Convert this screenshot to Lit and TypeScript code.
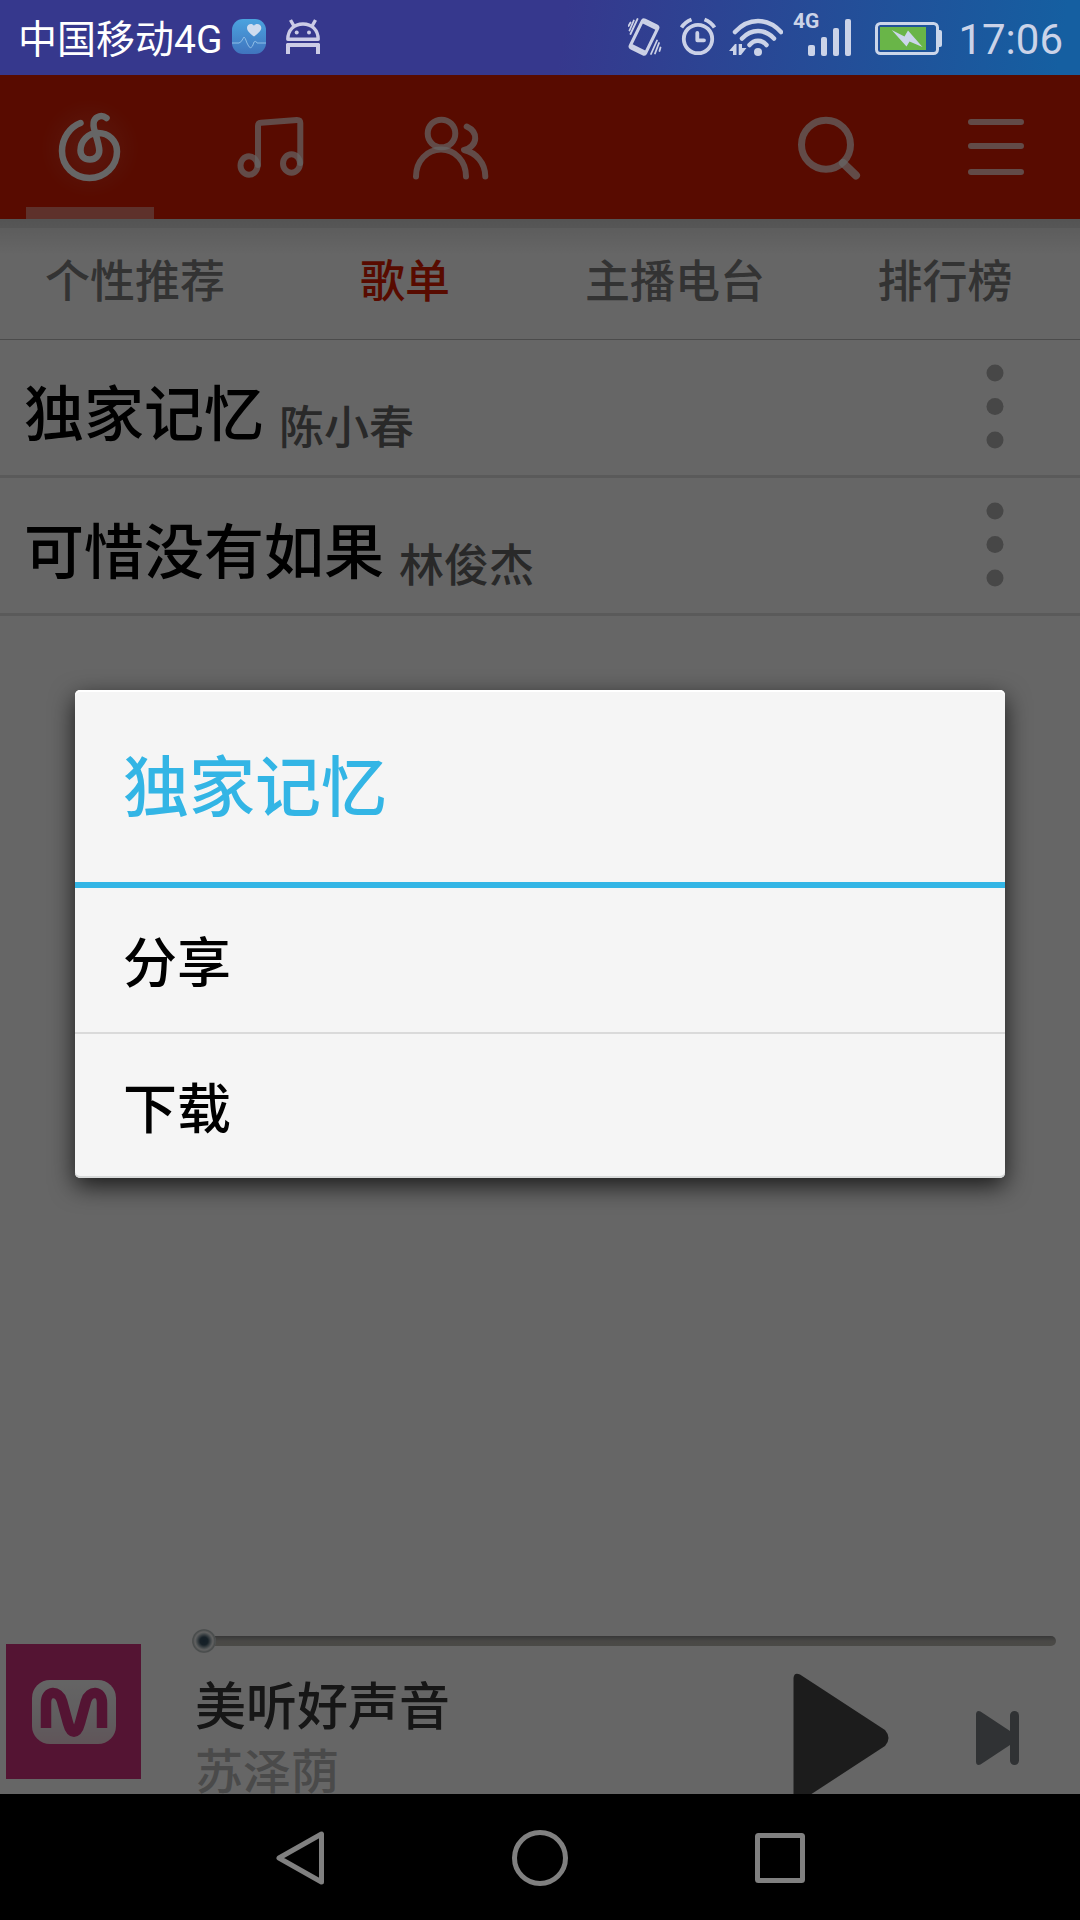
import { LitElement, html, css, svg } from "lit";
import { customElement, state } from "lit/decorators.js";
import { classMap } from "lit/directives/class-map.js";

interface Song {
  title: string;
  artist: string;
}

const songs: Song[] = [
  { title: "独家记忆", artist: "陈小春" },
  { title: "可惜没有如果", artist: "林俊杰" },
];

const sections = ["个性推荐", "歌单", "主播电台", "排行榜"];
const actions = ["分享", "下载"];

const mainTabs = [
  {
    label: "发现",
    icon: svg`
      <defs>
        <radialGradient id="glow">
          <stop offset="0" stop-color="#fff" stop-opacity="0.16" />
          <stop offset="0.5" stop-color="#fff" stop-opacity="0.08" />
          <stop offset="1" stop-color="#fff" stop-opacity="0" />
        </radialGradient>
      </defs>
      <circle cx="90" cy="73" r="50" fill="url(#glow)" />
      <path class="bright" stroke-width="6.5" d="M80.5 48C70 52 62 63 62 76C62 91 74 103 89.5 103C105 103 117 91 117 76.5C117 66 109 58 98 58C88 58 80.5 66 80.5 75.5C80.5 81 84.5 84.5 90 84.5C95.5 84.5 99.3 80.5 99.3 75.5C99.3 71 97 64 95.5 59C94 54 92.5 50 94 46C96 41 102 39.5 106.5 43" />`,
  },
  {
    label: "我的音乐",
    icon: svg`
      <path stroke-width="6" d="M78 90V51Q78 48 81 47.8L117 45Q120.300 45 120.300 48V88" />
      <ellipse cx="69" cy="90.500" rx="8.500" ry="9.300" stroke-width="6" />
      <ellipse cx="111.500" cy="88.500" rx="8.500" ry="9.300" stroke-width="6" />`,
  },
  {
    label: "朋友",
    icon: svg`
      <circle cx="81.500" cy="58.500" r="13.800" stroke-width="6" />
      <path stroke-width="6" d="M56 101.500C56 86 67 74.500 81 74.500S106 86 106 101.500" />
      <path stroke-width="6" d="M106.700 51.500C112 54 115.500 58 115.200 63.500C115 69 110 74 104 75C116 77.500 125.300 88 125.300 101.500" />`,
  },
];

const headerTools = [
  {
    label: "搜索",
    icon: svg`
      <circle cx="82" cy="69.700" r="24.500" stroke-width="7" />
      <path stroke-width="8" d="M99 88L112 100.500" />`,
  },
  {
    label: "菜单",
    icon: svg`<path stroke-width="6" d="M59 47H109M59 71H109M59 97H109" />`,
  },
];

const navButtons = [
  { label: "返回", icon: svg`<path d="M51.500 7V55L9 31Z" />` },
  { label: "主屏幕", icon: svg`<circle cx="30" cy="31" r="25.500" />` },
  { label: "最近任务", icon: svg`<rect x="7.500" y="8.500" width="45" height="45" rx="1" />` },
];

@customElement("app-root")
export class AppRoot extends LitElement {
  @state() private section = 1;
  @state() private chosen: Song | null = songs[0];

  static styles = css`
    :host {
      display: flex;
      flex-direction: column;
      height: 100vh;
      background: #fff;
      font-family: "Noto Sans CJK SC", sans-serif;
      font-weight: 500;
      --red: #dc1c00;
    }
    * {
      box-sizing: border-box;
    }
    button {
      display: flex;
      align-items: center;
      justify-content: center;
      margin: 0;
      padding: 0;
      border: 0;
      background: none;
      color: inherit;
      font: inherit;
    }
    svg {
      display: block;
      flex: none;
    }
    ul,
    h2,
    p {
      margin: 0;
      padding: 0;
      list-style: none;
      font-weight: inherit;
    }

    .status {
      flex: none;
      display: flex;
      align-items: center;
      gap: 10px;
      height: 75px;
      padding: 0 17px 0 18px;
      background: linear-gradient(98deg, #36388d 52%, #155fa1 98%);
      color: #cbd3e8;
      font-family: Roboto, "Noto Sans CJK SC", sans-serif;
      font-weight: 400;
    }
    .carrier,
    .clock {
      padding-top: 4px;
      line-height: 72px;
    }
    .carrier {
      color: #fff;
      font-size: 39px;
    }
    .clock {
      font-size: 42px;
    }
    .space {
      flex: 1;
    }
    .small {
      font: 700 21px Roboto, sans-serif;
    }

    .screen {
      position: relative;
      flex: 1;
      min-height: 0;
      overflow: hidden;
      display: flex;
      flex-direction: column;
    }
    .header {
      flex: none;
      display: flex;
      height: 144px;
      background: var(--red);
    }
    .header svg {
      fill: none;
      stroke: rgba(255, 255, 255, 0.7);
      stroke-linecap: round;
      stroke-linejoin: round;
    }
    .header svg .bright {
      stroke: #fff;
    }
    .header circle[fill] {
      stroke: none;
    }
    .tab {
      position: relative;
    }
    .tab.active::after {
      content: "";
      position: absolute;
      left: 26px;
      right: 26px;
      bottom: 0;
      height: 12px;
      background: rgba(255, 255, 255, 0.42);
    }

    .sections {
      flex: none;
      display: flex;
      height: 121px;
      padding-top: 9px;
      border-bottom: 1px solid #bcbcbc;
      background: linear-gradient(#d2d2d2 0, #d7d7d7 9px, #e8e8e8 9px, #fff 36px);
      color: #808080;
      font-size: 45px;
      line-height: 60px;
    }
    .sections button {
      flex: 1;
      padding-bottom: 10px;
    }
    .sections .active {
      color: var(--red);
    }

    .song {
      display: flex;
      align-items: center;
      border-bottom: 3px solid #e1e1e1;
    }
    .song .name {
      flex: 1;
      align-items: flex-end;
      justify-content: flex-start;
      gap: 15px;
      padding: 28px 0 23px 24px;
    }
    .title {
      color: #000;
      font-size: 60px;
      line-height: 84px;
    }
    .artist {
      color: #666;
      font-size: 45px;
      line-height: 54px;
    }
    .more {
      width: 170px;
      height: 135px;
      fill: #b1b1b1;
    }

    .player {
      flex: none;
      display: flex;
      gap: 51px;
      height: 174px;
      margin-top: auto;
      padding: 0 24px 0 6px;
    }
    .cover {
      margin-top: 24px;
    }
    .deck {
      flex: 1;
      padding-top: 9px;
    }
    .seek {
      display: block;
      width: 100%;
      height: 24px;
      margin: 0 0 19px;
      appearance: none;
      background: none;
    }
    .seek::-webkit-slider-runnable-track {
      height: 10px;
      border-radius: 5px;
      background: linear-gradient(#8c8c8c, #b6b4ae 50%, #bbb9b1);
    }
    .seek::-webkit-slider-thumb {
      appearance: none;
      width: 24px;
      height: 24px;
      margin-top: -7px;
      border-radius: 50%;
      background: radial-gradient(circle, #324d60 0, #3c5566 4px, #d2dadc 8px, #f4f4f4 9px, #b4bcbc 11px, #d0d4d4 12px);
    }
    .playing {
      display: flex;
      align-items: flex-start;
      gap: 39px;
    }
    .meta {
      flex: 1;
      padding-left: 3px;
    }
    .now {
      color: #373737;
      font-size: 51px;
      line-height: 62px;
    }
    .by {
      color: #b8b8b8;
      font-size: 48px;
      line-height: 68px;
    }
    .play {
      width: 120px;
    }
    .next {
      width: 116px;
      height: 132px;
    }

    .scrim {
      position: absolute;
      inset: 0;
      display: flex;
      align-items: center;
      padding: 0 75px 1px;
      background: rgba(0, 0, 0, 0.6);
    }
    .dialog {
      flex: 1;
      border-radius: 5px;
      background: #f5f5f5;
      box-shadow: 0 8px 24px rgba(0, 0, 0, 0.75), inset 0 2px #fff, inset 0 -2px #d8dada;
    }
    .dialog h2 {
      padding: 44px 48px 52px;
      border-bottom: 6px solid #33b5e5;
      color: #33b5e5;
      font-size: 66px;
      line-height: 96px;
    }
    .dialog li + li {
      border-top: 2px solid #dadada;
    }
    .dialog button {
      width: 100%;
      height: 144px;
      justify-content: flex-start;
      padding: 0 48px;
      color: #000;
      font-size: 54px;
      line-height: 72px;
    }

    .nav {
      flex: none;
      display: flex;
      justify-content: center;
      height: 126px;
      background: #000;
    }
    .nav button {
      flex: 0 1 240px;
    }
    .nav svg {
      fill: none;
      stroke: #808080;
      stroke-width: 5;
      stroke-linejoin: round;
    }
  `;

  private renderStatus() {
    return html`
      <div class="status">
        <span class="carrier">中国移动4G</span>
        <svg width="44" height="75" viewBox="0 0 44 75" aria-hidden="true">
          <defs>
            <linearGradient id="health" x2="0" y2="1">
              <stop offset="0" stop-color="#4ba3df" />
              <stop offset="1" stop-color="#4074be" />
            </linearGradient>
          </defs>
          <rect y="19" width="34" height="35" rx="11" fill="url(#health)" />
          <path fill="#cfdcef" d="M22 36.500C17 33 15 30.500 15 27.800C15 24 20 22.300 22 25.800C24 22.300 29.300 24 29.300 27.800C29.300 30.500 27 33 22 36.500Z" />
          <path fill="none" stroke="#8fbde6" stroke-width="1" stroke-linejoin="round" d="M0 43H7Q9 43 12 37Q13 37 15 43Q19 53 22 42Q24 40 25 43H34" />
        </svg>
        <svg width="34" height="75" viewBox="0 0 34 75" aria-hidden="true" fill="none" stroke="#cccce6" stroke-width="3.400" stroke-linecap="round">
          <path stroke-linejoin="round" d="M1.800 39.200C2 30 8 24 17 24S32 30 32.200 39.200Z" />
          <path stroke-linecap="butt" d="M4.500 20L8.500 27M29.500 20L25.500 27" />
          <circle cx="10.700" cy="32.500" r="2" fill="#cccce6" stroke="none" />
          <circle cx="23" cy="32.500" r="2" fill="#cccce6" stroke="none" />
          <path fill="#cccce6" stroke="none" d="M1 43H33L34 44V54H30V47H4V54H0V44Z" />
        </svg>
        <span class="space"></span>
        <svg width="42" height="75" viewBox="0 0 42 75" aria-hidden="true" fill="none" stroke="#cbd0e6" stroke-width="1.800" stroke-linecap="round">
          <g transform="rotate(26 16 37)">
            <rect x="7.500" y="21.500" width="17" height="31" rx="2" stroke-width="3.200" />
            <path stroke-width="3" d="M9 24H23M9 50H23" />
          </g>
          <path d="M2.500 22.500L0.500 26M5.800 20.500L1.500 30.500M9.500 19L2.500 34M32.500 47.500L31.500 51M31 43L27 53.500M29 40.500L23 54" />
        </svg>
        <svg width="39" height="75" viewBox="0 0 39 75" aria-hidden="true" fill="none" stroke="#cbd1e7" stroke-width="3.800" stroke-linecap="round">
          <circle cx="18" cy="39" r="14.200" />
          <path stroke-linejoin="round" d="M17.300 33V40.300H24" />
          <path stroke-linecap="butt" d="M1.500 27.500Q5 22 11.500 19.500M34.500 27.500Q31 22 24.500 19.500" />
        </svg>
        <svg width="54" height="75" viewBox="0 0 54 75" aria-hidden="true" fill="none" stroke="#cbd3e8" stroke-width="4.500" stroke-linecap="round">
          <path d="M6 32Q16 21 29 21T52 32M13 38.500Q20 31 29 31T45 38.500M20.500 45Q24 40.700 29 40.700T37.500 45" />
          <circle cx="29" cy="52" r="4" fill="#cbd3e8" stroke="none" />
          <path fill="#cbd3e8" stroke="none" d="M0 51L6 44H7.500V55H4V51ZM9.700 44H13V48H17.500L12 55H9.700Z" />
        </svg>
        <svg width="72" height="75" viewBox="0 0 72 75" aria-hidden="true" fill="#cbd3e8">
          <text class="small" x="0" y="28">4G</text>
          <rect x="15" y="45" width="7" height="11" rx="2" />
          <rect x="28" y="37" width="6" height="19" rx="2" />
          <rect x="40" y="28" width="6" height="28" rx="2" />
          <rect x="52" y="19" width="6" height="37" rx="2" />
        </svg>
        <svg width="73" height="75" viewBox="0 0 73 75" aria-hidden="true">
          <rect x="1.500" y="23.500" width="61" height="30" rx="4" fill="none" stroke="#cbd6ea" stroke-width="3" />
          <path fill="#cbd6ea" d="M63 30H65Q67 30 67 32V45Q67 47 65 47H63Z" />
          <rect x="5" y="27" width="46" height="23" fill="#69b548" />
          <path fill="#cbd6ea" d="M16.700 30L29.500 36.500L33 30.500L47.500 47L34.500 41.500L31.500 46.500Z" />
        </svg>
        <span class="clock">17:06</span>
      </div>
    `;
  }

  private renderHeader() {
    return html`
      <div class="header">
        ${mainTabs.map(
          (tab, i) => html`
            <button class=${classMap({ tab: true, active: i === 0 })} aria-label=${tab.label}>
              <svg width="180" height="144" viewBox="0 0 180 144">${tab.icon}</svg>
            </button>
          `
        )}
        <span class="space"></span>
        ${headerTools.map(
          (tool) => html`
            <button aria-label=${tool.label}>
              <svg width="168" height="144" viewBox="0 0 168 144">${tool.icon}</svg>
            </button>
          `
        )}
      </div>
    `;
  }

  private renderSongs() {
    return html`
      <ul>
        ${songs.map(
          (song) => html`
            <li class="song">
              <button class="name">
                <span class="title">${song.title}</span>
                <span class="artist">${song.artist}</span>
              </button>
              <button class="more" aria-label="更多" @click=${() => (this.chosen = song)}>
                <svg width="18" height="87" viewBox="0 0 18 87">
                  <circle cx="9" cy="9" r="8.500" />
                  <circle cx="9" cy="42.500" r="8.500" />
                  <circle cx="9" cy="76" r="8.500" />
                </svg>
              </button>
            </li>
          `
        )}
      </ul>
    `;
  }

  private renderPlayer() {
    return html`
      <div class="player">
        <svg class="cover" width="135" height="135" viewBox="0 0 135 135" aria-hidden="true">
          <defs>
            <linearGradient id="plate" x2="0" y2="1">
              <stop offset="0" stop-color="#fbfbfb" />
              <stop offset="0.600" stop-color="#f0e8ec" />
              <stop offset="1" stop-color="#f0d4de" />
            </linearGradient>
          </defs>
          <rect width="135" height="135" fill="#d23280" />
          <rect x="26" y="36" width="84" height="64" rx="18" fill="url(#plate)" />
          <path fill="none" stroke="#d23280" stroke-width="10.500" d="M40 84V59C40 46 52.500 46 56 57L62 79C65 90.500 71 90.500 74 79L80 57C83.500 46 96 46 96 59V84" />
        </svg>
        <div class="deck">
          <input class="seek" type="range" min="0" max="100" .value=${"0"} aria-label="播放进度" />
          <div class="playing">
            <div class="meta">
              <p class="now">美听好声音</p>
              <p class="by">苏泽荫</p>
            </div>
            <button class="play" aria-label="播放">
              <svg width="96" height="132" viewBox="0 0 96 132">
                <path fill="#474747" d="M0.500 6Q1 0 7 2.500L92 58Q99 66 92 74L7 129.500Q1 132 0.500 126Z" />
              </svg>
            </button>
            <button class="next" aria-label="下一首">
              <svg width="44" height="56" viewBox="0 0 44 56">
                <path fill="#787d82" d="M0 4Q0.500 0 4.500 1.500L34 21V35L4.500 54.500Q0.500 56 0 52Z" />
                <rect x="34" y="1" width="9" height="54" rx="4.500" fill="#787d82" />
              </svg>
            </button>
          </div>
        </div>
      </div>
    `;
  }

  private renderDialog(song: Song) {
    return html`
      <div class="scrim">
        <div class="dialog" role="dialog" aria-modal="true" aria-labelledby="dialog-title">
          <h2 id="dialog-title">${song.title}</h2>
          <ul>
            ${actions.map(
              (action) => html`<li><button @click=${() => (this.chosen = null)}>${action}</button></li>`
            )}
          </ul>
        </div>
      </div>
    `;
  }

  render() {
    return html`
      ${this.renderStatus()}
      <div class="screen">
        ${this.renderHeader()}
        <div class="sections">
          ${sections.map(
            (name, i) => html`
              <button class=${classMap({ active: i === this.section })} @click=${() => (this.section = i)}>
                ${name}
              </button>
            `
          )}
        </div>
        ${this.renderSongs()} ${this.renderPlayer()}
        ${this.chosen ? this.renderDialog(this.chosen) : null}
      </div>
      <div class="nav">
        ${navButtons.map(
          (item) => html`
            <button aria-label=${item.label}>
              <svg width="60" height="60" viewBox="0 0 60 60">${item.icon}</svg>
            </button>
          `
        )}
      </div>
    `;
  }
}
